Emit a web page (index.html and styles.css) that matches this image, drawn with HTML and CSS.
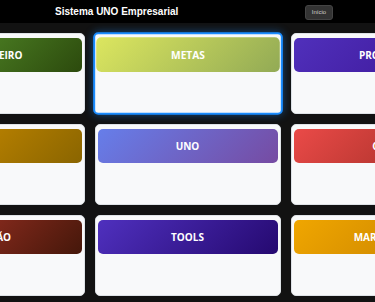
FILE: index.html
```html
<!DOCTYPE html>
<html lang="pt-BR">
<head>
  <meta charset="UTF-8" />
  <meta name="viewport" content="width=device-width, initial-scale=1.0"/>
  <title>Sistema UNO Empresarial</title>
  <link rel="stylesheet" href="styles.css">
</head>
<body>

<header class="topbar">
  <h1 class="brand">Sistema UNO Empresarial</h1>
  <button class="btn-home">Início</button>
</header>

<main class="modules">
  <div class="module-card">
    <div class="module-title financeiro">FINANCEIRO</div>
  </div>
  <div class="module-card active">
    <div class="module-title metas">METAS</div>
  </div>
  <div class="module-card">
    <div class="module-title projetos">PROJETOS</div>
  </div>

  <div class="module-card">
    <div class="module-title rh">RH</div>
  </div>
  <div class="module-card">
    <div class="module-title uno">UNO</div>
  </div>
  <div class="module-card">
    <div class="module-title crm">CRM</div>
  </div>

  <div class="module-card">
    <div class="module-title gestao">GESTÃO</div>
  </div>
  <div class="module-card">
    <div class="module-title tools">TOOLS</div>
  </div>
  <div class="module-card">
    <div class="module-title marketing">MARKETING</div>
  </div>
</main>

</body>
</html>
```

FILE: styles.css
```css
* {
  box-sizing: border-box;
}

body {
  margin: 0;
  background: #121212;
  font-family: "Liberation Sans", Arial, sans-serif;
  height: 100vh;
  overflow: hidden;
}

.topbar {
  height: 23px;
  background: #000;
  display: flex;
  align-items: center;
  justify-content: space-between;
  padding: 0 42px 0 55px;
}

.brand {
  margin: 0;
  color: #fff;
  font-size: 10px;
  font-weight: bold;
}

.btn-home {
  height: 15px;
  width: 28px;
  padding: 0;
  background: #333;
  border: 1px solid #444;
  border-radius: 3px;
  color: #ccc;
  font-family: "Liberation Sans", Arial, sans-serif;
  font-size: 6px;
  margin-top: 1px;
}

.modules {
  display: grid;
  grid-template-columns: repeat(3, 186px);
  grid-auto-rows: 81px;
  justify-content: center;
  gap: 10px;
  padding-top: 10px;
}

.module-card {
  background: #f8f9fa;
  border: 1px solid #dee2e6;
  border-radius: 5px;
  padding: 4px 2px;
}

.module-card.active {
  transform: scale(1.02);
  border: 2px solid #1a8cff;
  padding: 3px 1px;
  box-shadow: 0 0 8px rgba(26, 140, 255, 0.45);
}

.module-title {
  height: 34px;
  border-radius: 5px;
  display: flex;
  align-items: center;
  justify-content: center;
  color: #fff;
  font-family: "Open Sans", sans-serif;
  font-size: 10px;
  font-weight: bold;
}

.financeiro { background: linear-gradient(135deg, #5c9a2f, #2c4a0d); }
.metas { background: linear-gradient(135deg, #dce65f, #92aa55); }
.projetos { background: linear-gradient(135deg, #5030bb, #3a1394); }
.rh { background: linear-gradient(135deg, #d49100, #8a6500); }
.uno { background: linear-gradient(135deg, #667eea, #764ba2); }
.crm { background: linear-gradient(135deg, #ea4a48, #9a2b22); }
.gestao { background: linear-gradient(135deg, #b03629, #45170a); }
.tools { background: linear-gradient(135deg, #4f30be, #250970); }
.marketing { background: linear-gradient(135deg, #f0a600, #c27e00); }
```
